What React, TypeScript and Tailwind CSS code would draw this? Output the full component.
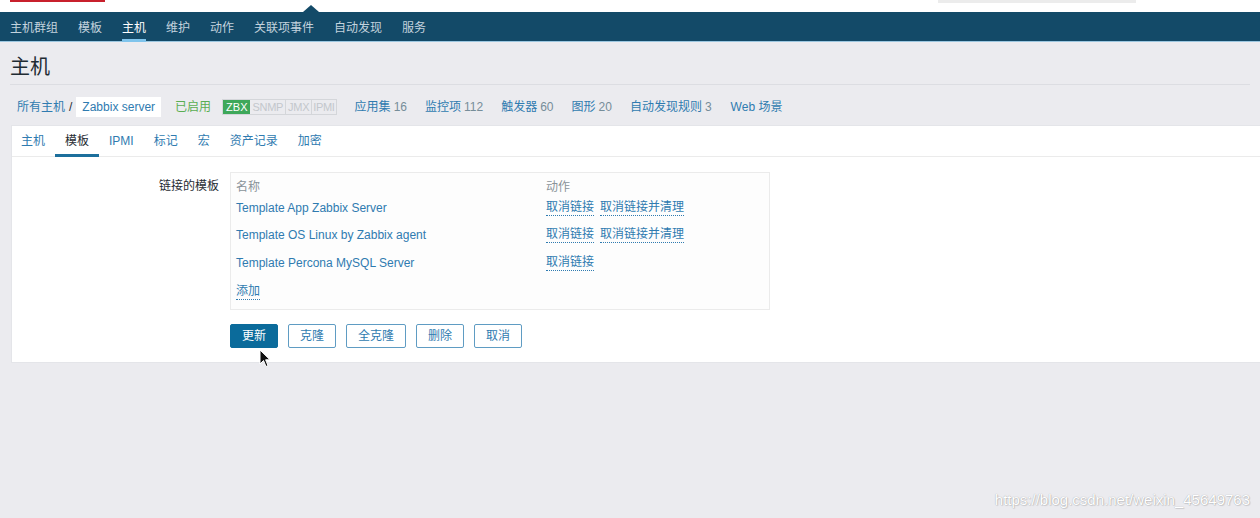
import React from 'react';

const font = { fontFamily: '"Liberation Sans", Arial, "Noto Sans CJK SC", sans-serif' };

const navItems = ['主机群组', '模板', '主机', '维护', '动作', '关联项事件', '自动发现', '服务'];
const tabs = ['主机', '模板', 'IPMI', '标记', '宏', '资产记录', '加密'];

const templates = [
  { name: 'Template App Zabbix Server', clear: true },
  { name: 'Template OS Linux by Zabbix agent', clear: true },
  { name: 'Template Percona MySQL Server', clear: false },
];

function DotLink({ children }: { children: React.ReactNode }) {
  return (
    <span className="text-[#2f7bb0] border-b border-dotted border-[#2f7bb0] leading-[15px] cursor-pointer">
      {children}
    </span>
  );
}

export default function App() {
  return (
    <div className="relative min-h-[518px] bg-[#ebebef] text-[12px] text-[#1f2c33]" style={font}>
      {/* top strip */}
      <div className="relative h-[12px] bg-white">
        <div className="absolute left-[10px] top-0 h-[2px] w-[95px] bg-[#c8202c]" />
        <div className="absolute left-[938px] top-0 h-[3px] w-[198px] bg-[#ececec]" />
        <div className="absolute left-[303px] top-[5px] h-0 w-0 border-x-[8px] border-b-[7px] border-x-transparent border-b-[#134a68]" />
      </div>

      {/* nav */}
      <nav className="flex h-[30px] items-stretch bg-[#134a68] border-b border-[#9cc7e0] pl-[10px]">
        {navItems.map((n, i) => (
          <div key={n} className="relative mr-[20px] flex items-center pt-[2px]">
            <span className={i === 2 ? 'text-white' : 'text-[#c3d3de]'}>{n}</span>
            {i === 2 && <div className="absolute bottom-[-1px] left-0 right-0 h-[3px] bg-[#7fc4ec]" />}
          </div>
        ))}
      </nav>

      {/* title */}
      <div className="px-[10px]">
        <h1 className="pt-[15px] pb-[7px] text-[20px] leading-[20px] font-normal text-[#1f2c33] border-b border-[#dcdde2]">
          主机
        </h1>
      </div>

      {/* breadcrumbs */}
      <div className="flex items-center h-[20px] mt-[12px] pl-[17px]">
        <span className="text-[#2f7bb0]">所有主机</span>
        <span className="mx-[4px] text-[#1f2c33]">/</span>
        <span className="bg-white px-[6px] h-[20px] flex items-center text-[#2f7bb0]">Zabbix server</span>
        <span className="ml-[14px] text-[#5aae52]">已启用</span>
        <div className="ml-[11px] flex h-[16px] border border-[#d4d6da] text-[11px] leading-[14px]">
          <span className="bg-[#3ea85a] text-white px-[3px]">ZBX</span>
          <span className="text-[#c3c7cc] px-[2px] tracking-[-0.3px] border-r border-[#d4d6da]">SNMP</span>
          <span className="text-[#c3c7cc] px-[2px] tracking-[-0.3px] border-r border-[#d4d6da]">JMX</span>
          <span className="text-[#c3c7cc] px-[1px] tracking-[-0.3px]">IPMI</span>
        </div>
        {[
          ['应用集', '16'],
          ['监控项', '112'],
          ['触发器', '60'],
          ['图形', '20'],
          ['自动发现规则', '3'],
        ].map(([a, b]) => (
          <span key={a} className="ml-[18px] text-[#2f7bb0]">
            {a}
            <span className="ml-[3px] text-[#768d99] text-[12px]">{b}</span>
          </span>
        ))}
        <span className="ml-[19px] text-[#2f7bb0]">Web 场景</span>
      </div>

      {/* panel */}
      <div className="ml-[11px] mt-[8px] bg-white border border-[#e4e5e9] border-r-0">
        <div className="flex h-[31px] items-stretch border-b border-[#ebebeb]">
          {tabs.map((t, i) => (
            <div key={t} className="relative flex items-center px-[10px] first:pl-[9px]">
              <span className={i === 1 ? 'text-[#1f2c33]' : 'text-[#2f7bb0]'}>{t}</span>
              {i === 1 && <div className="absolute bottom-[-1px] left-0 right-0 h-[3px] bg-[#1c6f9c]" />}
            </div>
          ))}
        </div>

        <div className="flex pt-[15px] pb-[14px]">
          <div className="w-[218px] text-right pt-[5px] pr-[11px] text-[#1f2c33]">链接的模板</div>
          <div>
            <div className="w-[540px] border border-[#ebebeb] bg-[#fdfdfd] px-[5px] pt-[5px] pb-[4px]">
              <div className="flex h-[16px] text-[#8a9399]">
                <div className="w-[310px]">名称</div>
                <div>动作</div>
              </div>
              {templates.map((t) => (
                <div key={t.name} className="flex h-[27.5px] items-center">
                  <div className="w-[310px] text-[#2f7bb0]">{t.name}</div>
                  <div className="flex gap-[6px]">
                    <DotLink>取消链接</DotLink>
                    {t.clear && <DotLink>取消链接并清理</DotLink>}
                  </div>
                </div>
              ))}
              <div className="flex h-[28px] items-center pt-[2px]">
                <DotLink>添加</DotLink>
              </div>
            </div>

            <div className="flex gap-[10px] mt-[14px]">
              <button className="h-[24px] w-[48px] rounded-[2px] bg-[#0b6b9b] text-white border border-[#0b6b9b]">
                更新
              </button>
              {['克隆', '全克隆', '删除', '取消'].map((b) => (
                <button
                  key={b}
                  className="h-[24px] px-[11px] rounded-[2px] bg-white text-[#2f7bb0] border border-[#5f9cc3]"
                >
                  {b}
                </button>
              ))}
            </div>
          </div>
        </div>
      </div>

      {/* cursor */}
      <svg className="absolute left-[259px] top-[349px]" width="12" height="19" viewBox="0 0 12 19">
        <path d="M1 1 L1 15 L4.5 11.5 L7 17.5 L9 16.6 L6.6 10.8 L11 10.8 Z" fill="#111" stroke="#fff" strokeWidth="1" />
      </svg>

      {/* watermark */}
      <div
        className="absolute right-[10px] top-[489px] text-[15px] text-white"
        style={{ textShadow: '0 0 1px rgba(0,0,0,0.35), 1px 1px 1px rgba(0,0,0,0.12)' }}
      >
        https://blog.csdn.net/weixin_45649763
      </div>
    </div>
  );
}
